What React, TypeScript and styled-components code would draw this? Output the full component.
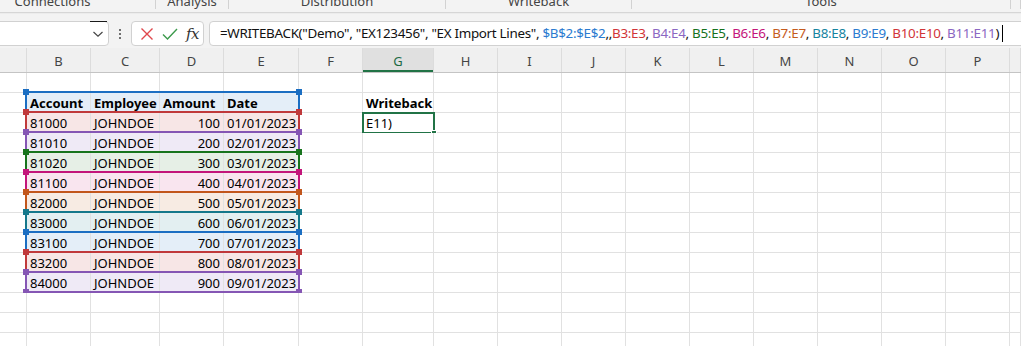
import React from "react";
import styled, { createGlobalStyle } from "styled-components";

const Global = createGlobalStyle`
  html, body { margin: 0; padding: 0; background: #ffffff; overflow: hidden; }
  body { font-family: "Noto Sans", "Open Sans", sans-serif; }
  * { box-sizing: border-box; }
`;

const Page = styled.div`
  width: 1021px;
  height: 346px;
  overflow: hidden;
  display: flex;
  flex-direction: column;
  background: #fff;
`;

const Ribbon = styled.div`
  height: 13px;
  display: flex;
  background: #f3f3f3;
  border-bottom: 1px solid #d6d6d6;
  overflow: hidden;
  flex-shrink: 0;
`;

const RibbonGroup = styled.div<{ $w?: number; $shift?: number }>`
  ${(p) => (p.$w ? `width: ${p.$w}px;` : "flex: 1;")}
  flex-shrink: 0;
  display: flex;
  justify-content: center;
  border-right: 1px solid #d2d2d2;
  height: 9px;
  padding-right: ${(p) => p.$shift ?? 0}px;
`;

const RibbonLabel = styled.span`
  font-size: 13px;
  color: #444;
  line-height: 13px;
  margin-top: -5px;
  white-space: nowrap;
`;

const FormulaRow = styled.div`
  height: 35px;
  flex-shrink: 0;
  display: flex;
  align-items: flex-start;
  padding-top: 7px;
  background: #f3f3f3;
  border-top: 1px solid #ececec;
`;

const NameBox = styled.div`
  position: relative;
  width: 115px;
  height: 25px;
  margin-left: -6px;
  background: #fff;
  border: 1px solid #d1d1d1;
  border-radius: 0 4px 4px 0;
  display: flex;
  justify-content: flex-end;
  align-items: center;
  padding-right: 4px;
  &::before {
    content: "";
    position: absolute;
    top: -1px;
    right: 1px;
    width: 17px;
    height: 1px;
    background: #1a1a1a;
  }
`;

const Grip = styled.div`
  width: 22px;
  height: 25px;
  display: flex;
  flex-direction: column;
  align-items: center;
  justify-content: center;
  gap: 2px;
  & > span {
    width: 2px;
    height: 2px;
    background: #444;
    border-radius: 1px;
  }
`;

const ButtonBox = styled.div`
  width: 73px;
  height: 25px;
  background: #fff;
  border: 1px solid #d1d1d1;
  border-radius: 4px;
  display: flex;
  align-items: center;
  padding-left: 5px;
  gap: 4px;
  margin-right: 5px;
`;

const IconSlot = styled.div`
  width: 19px;
  height: 19px;
  display: flex;
  align-items: center;
  justify-content: center;
`;

const Fx = styled.span`
  font-family: "DejaVu Serif", "Liberation Serif", serif;
  font-style: italic;
  font-size: 15px;
  color: #333;
  margin-left: 3px;
  letter-spacing: -0.5px;
`;

const FormulaBox = styled.div`
  flex: 1;
  height: 25px;
  margin-right: -10px;
  background: #fff;
  border: 1px solid #d1d1d1;
  border-radius: 4px;
  display: flex;
  align-items: center;
  padding-left: 10px;
  white-space: nowrap;
  overflow: hidden;
`;

const FormulaText = styled.span`
  font-size: 13.4px;
  letter-spacing: -0.3px;
  color: #111;
  line-height: 23px;
  white-space: pre;
`;

const Ref = styled.span<{ $c: string }>`
  color: ${(p) => p.$c};
`;

const Caret = styled.span`
  display: inline-block;
  width: 1px;
  height: 17px;
  background: #000;
  margin-left: 3px;
  vertical-align: -4px;
`;

const COLS = "27px 64px 69px 64px 75px 64px 71px repeat(9, 64px) 1fr";

const HeaderRow = styled.div`
  display: grid;
  grid-template-columns: ${COLS};
  height: 25px;
  flex-shrink: 0;
  background: #f0f0f0;
  border-bottom: 1px solid #c4c4c4;
`;

const ColHead = styled.div<{ $active?: boolean }>`
  display: flex;
  align-items: center;
  justify-content: center;
  font-size: 13px;
  color: ${(p) => (p.$active ? "#1e6b45" : "#444")};
  background: ${(p) => (p.$active ? "#e0e0e0" : "transparent")};
  border-right: 1px solid #dcdcdc;
  box-shadow: ${(p) => (p.$active ? "inset 0 -2px 0 #217346" : "none")};
  padding-top: 1px;
`;

const Row = styled.div`
  position: relative;
  display: grid;
  grid-template-columns: ${COLS};
  height: 20px;
  flex-shrink: 0;
`;

const Cell = styled.div<{ $fill?: string; $bold?: boolean; $right?: boolean }>`
  height: 20px;
  border-right: 1px solid #e1e1e1;
  border-bottom: 1px solid #e1e1e1;
  background: ${(p) => p.$fill ?? "#fff"};
  font-size: 13px;
  line-height: 20px;
  font-weight: ${(p) => (p.$bold ? 700 : 400)};
  color: #000;
  padding: 0 3px 0 3px;
  text-align: ${(p) => (p.$right ? "right" : "left")};
  white-space: nowrap;
  overflow: visible;
`;

const Frame = styled.div<{ $c: string }>`
  position: absolute;
  left: 25px;
  top: -2px;
  width: 275px;
  height: 22px;
  border: 2px solid ${(p) => p.$c};
  pointer-events: none;
`;

const Handle = styled.span<{ $c: string; $v: "top" | "bottom"; $h: "left" | "right" }>`
  position: absolute;
  width: 6px;
  height: 6px;
  background: ${(p) => p.$c};
  ${(p) => p.$v}: -4px;
  ${(p) => p.$h}: -4px;
`;

const Selection = styled.div`
  position: absolute;
  left: 362px;
  top: -1px;
  width: 73px;
  height: 22px;
  border: 2px solid #217346;
  pointer-events: none;
`;

const FillHandle = styled.span`
  position: absolute;
  right: -4px;
  bottom: -4px;
  width: 6px;
  height: 6px;
  background: #217346;
  border: 1px solid #fff;
`;

const C = {
  blue: "#1b6ec2",
  red: "#c0393b",
  purple: "#8556b4",
  green: "#17741d",
  magenta: "#c3157a",
  orange: "#c2561c",
  teal: "#15788b",
};

const FILL: Record<string, string> = {
  blue: "#e4eef8",
  red: "#f7e6e6",
  purple: "#efeaf6",
  green: "#e6efe6",
  magenta: "#f9e5ef",
  orange: "#f7ebe3",
  teal: "#e3eff1",
};

const TEXT: Record<string, string> = {
  blue: "#2b7bd0",
  red: "#d13438",
  purple: "#8b67c2",
  green: "#16721c",
  magenta: "#c4157a",
  orange: "#c55b1d",
  teal: "#1583a0",
};

type Key = keyof typeof C;

const data: { acc: string; amt: string; date: string; c: Key }[] = [
  { acc: "81000", amt: "100", date: "01/01/2023", c: "red" },
  { acc: "81010", amt: "200", date: "02/01/2023", c: "purple" },
  { acc: "81020", amt: "300", date: "03/01/2023", c: "green" },
  { acc: "81100", amt: "400", date: "04/01/2023", c: "magenta" },
  { acc: "82000", amt: "500", date: "05/01/2023", c: "orange" },
  { acc: "83000", amt: "600", date: "06/01/2023", c: "teal" },
  { acc: "83100", amt: "700", date: "07/01/2023", c: "blue" },
  { acc: "83200", amt: "800", date: "08/01/2023", c: "red" },
  { acc: "84000", amt: "900", date: "09/01/2023", c: "purple" },
];

const letters = ["", "B", "C", "D", "E", "F", "G", "H", "I", "J", "K", "L", "M", "N", "O", "P", ""];

const RangeFrame: React.FC<{ c: string }> = ({ c }) => (
  <Frame $c={c}>
    <Handle $c={c} $v="top" $h="left" />
    <Handle $c={c} $v="top" $h="right" />
    <Handle $c={c} $v="bottom" $h="left" />
    <Handle $c={c} $v="bottom" $h="right" />
  </Frame>
);

const EmptyCells: React.FC<{ from: number; g?: string; gBold?: boolean }> = ({ from, g, gBold }) => (
  <>
    {letters.slice(from).map((l, i) => (
      <Cell key={i} $bold={l === "G" && gBold}>
        {l === "G" ? g : null}
      </Cell>
    ))}
  </>
);

const refs: { t: string; c: Key }[] = [
  { t: "B4:E4", c: "purple" },
  { t: "B5:E5", c: "green" },
  { t: "B6:E6", c: "magenta" },
  { t: "B7:E7", c: "orange" },
  { t: "B8:E8", c: "teal" },
  { t: "B9:E9", c: "blue" },
  { t: "B10:E10", c: "red" },
  { t: "B11:E11", c: "purple" },
];

export default function App() {
  return (
    <Page>
      <Global />
      <Ribbon>
        <RibbonGroup $w={156} $shift={50}>
          <RibbonLabel>Connections</RibbonLabel>
        </RibbonGroup>
        <RibbonGroup $w={73}>
          <RibbonLabel>Analysis</RibbonLabel>
        </RibbonGroup>
        <RibbonGroup $w={217}>
          <RibbonLabel>Distribution</RibbonLabel>
        </RibbonGroup>
        <RibbonGroup $w={186}>
          <RibbonLabel>Writeback</RibbonLabel>
        </RibbonGroup>
        <RibbonGroup $w={379}>
          <RibbonLabel>Tools</RibbonLabel>
        </RibbonGroup>
        <RibbonGroup />
      </Ribbon>
      <FormulaRow>
        <NameBox>
          <svg width="12" height="8" viewBox="0 0 12 8">
            <path d="M1.5 2 L6 6.2 L10.5 2" fill="none" stroke="#444" strokeWidth="1.2" />
          </svg>
        </NameBox>
        <Grip>
          <span />
          <span />
          <span />
        </Grip>
        <ButtonBox>
          <IconSlot>
            <svg width="14" height="14" viewBox="0 0 14 14">
              <path d="M1.5 1.5 L12.5 12.5 M12.5 1.5 L1.5 12.5" stroke="#e0474c" strokeWidth="1.4" />
            </svg>
          </IconSlot>
          <IconSlot>
            <svg width="16" height="14" viewBox="0 0 16 14">
              <path d="M1 7.5 L5.5 12 L15 2" fill="none" stroke="#3c9a4c" strokeWidth="1.4" />
            </svg>
          </IconSlot>
          <Fx>fx</Fx>
        </ButtonBox>
        <FormulaBox>
          <FormulaText>
            {'=WRITEBACK("Demo", "EX123456", "EX Import Lines", '}
            <Ref $c={TEXT.blue}>$B$2:$E$2</Ref>
            {",,"}
            <Ref $c={TEXT.red}>B3:E3</Ref>
            {refs.map((r, i) => (
              <React.Fragment key={i}>
                {", "}
                <Ref $c={TEXT[r.c]}>{r.t}</Ref>
              </React.Fragment>
            ))}
            {")"}
            <Caret />
          </FormulaText>
        </FormulaBox>
      </FormulaRow>
      <HeaderRow>
        {letters.map((l, i) => (
          <ColHead key={i} $active={l === "G"}>
            {l}
          </ColHead>
        ))}
      </HeaderRow>

      <Row>
        <Cell />
        <EmptyCells from={1} />
      </Row>

      <Row>
        <Cell />
        <Cell $fill={FILL.blue} $bold>Account</Cell>
        <Cell $fill={FILL.blue} $bold>Employee</Cell>
        <Cell $fill={FILL.blue} $bold>Amount</Cell>
        <Cell $fill={FILL.blue} $bold>Date</Cell>
        <EmptyCells from={5} g="Writeback" gBold />
        <RangeFrame c={C.blue} />
      </Row>

      {data.map((d, i) => (
        <Row key={d.acc}>
          <Cell />
          <Cell $fill={FILL[d.c]}>{d.acc}</Cell>
          <Cell $fill={FILL[d.c]}>JOHNDOE</Cell>
          <Cell $fill={FILL[d.c]} $right>
            {d.amt}
          </Cell>
          <Cell $fill={FILL[d.c]} $right>
            {d.date}
          </Cell>
          <EmptyCells from={5} g={i === 0 ? "E11)" : undefined} />
          <RangeFrame c={C[d.c]} />
          {i === 0 && (
            <Selection>
              <FillHandle />
            </Selection>
          )}
        </Row>
      ))}

      {[0, 1, 2].map((k) => (
        <Row key={"e" + k}>
          <Cell />
          <EmptyCells from={1} />
        </Row>
      ))}
    </Page>
  );
}
